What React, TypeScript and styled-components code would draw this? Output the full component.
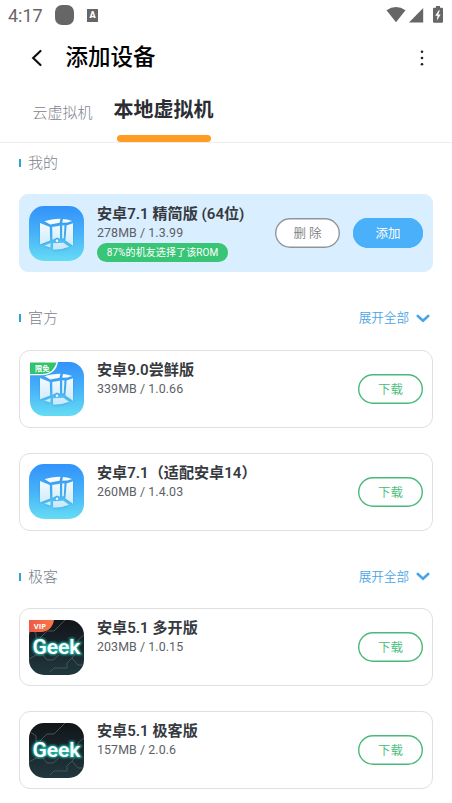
import React from 'react';
import styled, { createGlobalStyle } from 'styled-components';

const GlobalStyle = createGlobalStyle`
  * { box-sizing: border-box; }
  body {
    margin: 0;
    background: #fff;
    font-family: Roboto, "Noto Sans CJK SC", sans-serif;
    overflow: hidden;
  }
  button { font-family: inherit; padding: 0; }
`;

const Screen = styled.div`
  width: 452px;
  height: 803px;
  overflow: hidden;
  background: #fff;
  display: flex;
  flex-direction: column;
`;

const StatusBar = styled.header`
  height: 30px;
  flex: none;
  display: flex;
  align-items: center;
  padding: 0 8px 0 8px;
  color: #666;
`;

const Clock = styled.span`
  font-size: 18px;
  line-height: 30px;
  width: 47px;
  padding-top: 2px;
`;

const Squircle = styled.span`
  width: 19px;
  height: 20px;
  border-radius: 7px;
  background: #666;
  margin-right: 13px;
`;

const InputBadge = styled.span`
  width: 11px;
  height: 13px;
  background: #666;
  color: #fff;
  font-size: 9px;
  font-weight: 900;
  line-height: 13px;
  text-align: center;
  margin-right: auto;
`;

const AppBar = styled.div`
  height: 55px;
  flex: none;
  display: flex;
  align-items: center;
  padding: 0 26px 0 31px;
`;

const PageTitle = styled.h1`
  margin: 0 auto 0 22.6px;
  padding-bottom: 2px;
  font-size: 22.5px;
  line-height: 30px;
  font-weight: 500;
  color: #000;
`;

const Tabs = styled.nav`
  height: 58px;
  flex: none;
  display: flex;
  padding-left: 32.5px;
  gap: 21px;
  border-bottom: 1px solid #ededed;
`;

const Tab = styled.div<{ $active?: boolean }>`
  display: flex;
  flex-direction: column;
  align-items: center;
  justify-content: space-between;
  padding-top: ${p => (p.$active ? 11 : 16.5)}px;
  font-size: ${p => (p.$active ? 20 : 15)}px;
  line-height: ${p => (p.$active ? 28 : 22)}px;
  font-weight: ${p => (p.$active ? 700 : 300)};
  color: ${p => (p.$active ? '#2b2d33' : '#7d828c')};
  white-space: nowrap;
`;

const Indicator = styled.span`
  width: 94px;
  height: 7px;
  border-radius: 4px;
  background: #ff9c24;
`;

const Content = styled.main`
  padding: 8px 19px 0;
`;

const Section = styled.section`
  margin-bottom: 34.2px;
`;

const SectionHeader = styled.div`
  display: flex;
  align-items: center;
  height: 24px;
  margin-bottom: 19.3px;
  padding-right: 3px;
`;

const Marker = styled.span`
  width: 2px;
  height: 8px;
  background: #2ba3d4;
  margin-right: 7px;
`;

const SectionName = styled.h2`
  margin: 0;
  font-size: 15px;
  line-height: 22px;
  font-weight: 300;
  color: #7d828c;
`;

const Expand = styled.button`
  margin-left: auto;
  border: 0;
  background: none;
  display: flex;
  align-items: center;
  gap: 7px;
  font-size: 12.6px;
  line-height: 20px;
  font-weight: 350;
  color: #4aa5e6;
`;

const CardList = styled.div`
  display: flex;
  flex-direction: column;
  gap: 25px;
`;

const Card = styled.article<{ $selected?: boolean }>`
  height: 78px;
  display: flex;
  align-items: center;
  padding: 0 9px;
  border-radius: ${p => (p.$selected ? 9 : 11)}px;
  border: 1px solid ${p => (p.$selected ? '#d9eefe' : '#dfe0e1')};
  background: ${p => (p.$selected ? '#d9eefe' : '#fff')};
`;

const IconBox = styled.div`
  width: 55px;
  height: 55px;
  flex: none;
  margin-right: 13px;
`;

const Info = styled.div`
  align-self: flex-start;
  padding-top: 8px;
  flex: 1;
  min-width: 0;
  display: flex;
  flex-direction: column;
  align-items: flex-start;
`;

const Name = styled.h3`
  margin: 0;
  font-size: 15.1px;
  line-height: 22px;
  font-weight: 600;
  color: #363a40;
  white-space: nowrap;
`;

const Meta = styled.span`
  font-size: 12.4px;
  line-height: 16px;
  letter-spacing: 0.08px;
  color: #5b5f66;
`;

const Popularity = styled.span`
  width: 131px;
  height: 19px;
  margin-top: 2px;
  border-radius: 10px;
  background: #38c575;
  color: #fff;
  font-size: 10px;
  line-height: 19px;
  letter-spacing: 0.1px;
  text-align: center;
  white-space: nowrap;
`;

const Actions = styled.div`
  display: flex;
  gap: 13px;
`;

type Tone = 'neutral' | 'primary' | 'download';
const tones: Record<Tone, { line: string; fill: string; text: string; width: number }> = {
  neutral: { line: '#91959b', fill: '#fff', text: '#777b81', width: 65 },
  primary: { line: '#49b0f9', fill: '#49b0f9', text: '#fff', width: 70 },
  download: { line: '#49b97a', fill: '#fff', text: '#43bd78', width: 65 },
};

const Pill = styled.button<{ $tone: Tone }>`
  width: ${p => tones[p.$tone].width}px;
  height: 30px;
  border-radius: 15px;
  border: none;
  box-shadow: inset 0 0 0 1.4px ${p => tones[p.$tone].line};
  background: ${p => tones[p.$tone].fill};
  color: ${p => tones[p.$tone].text};
  font-size: 12.5px;
  line-height: 29px;
  padding-top: 1px;
  font-weight: ${p => (p.$tone === 'primary' ? 400 : 350)};
`;

type Flag = 'free' | 'vip';

function CubeIcon({ id, flag }: { id: string; flag?: Flag }) {
  return (
    <svg width="55" height="55" viewBox="0 0 55 55">
      <defs>
        <linearGradient id={`${id}-bg`} x1="0" y1="0" x2="0" y2="1">
          <stop offset="0" stopColor="#3292fb" />
          <stop offset="0.5" stopColor="#47b2f8" />
          <stop offset="1" stopColor="#65dcf4" />
        </linearGradient>
        <linearGradient id={`${id}-face`} gradientUnits="userSpaceOnUse" x1="0" y1="12" x2="0" y2="44">
          <stop offset="0" stopColor="#fbfdff" />
          <stop offset="1" stopColor="#c8e8fa" />
        </linearGradient>
        <filter id={`${id}-shade`} x="-20%" y="-20%" width="140%" height="140%">
          <feDropShadow dx="0" dy="0.8" stdDeviation="1.2" floodColor="#1e78c0" floodOpacity="0.35" />
        </filter>
      </defs>
      {flag === 'free' ? (
        <rect x="1" y="1" width="54" height="54" rx="14.5" fill={`url(#${id}-bg)`} />
      ) : (
        <rect width="55" height="55" rx="15" fill={`url(#${id}-bg)`} />
      )}
      <g fill={`url(#${id}-face)`} filter={`url(#${id}-shade)`}>
        <path d="M15.6 15.2 Q22 13 31.4 12.7 L30.6 16.8 L21.2 18.5 Z" />
        <path d="M34 12.9 Q39.5 13.2 43 15 L38.4 16.6 L33.2 16.8 Z" />
        <path d="M11 17 L20.8 20.9 L21.1 34.4 L11.4 38.2 Q11 38.2 11 37.6 Z" />
        <path d="M23.2 21 L31 19.8 V32.8 L28 31.6 L23.5 33.8 Z" />
        <path d="M33.2 19.6 L35.4 19.3 L34.8 32 L33.2 32.6 Z" />
        <path d="M37.6 19.6 L44 17.2 V39.8 L36.5 34.6 Z" />
        <path d="M15.6 39.6 L21.6 37.3 L21.3 41.4 Z" />
        <path d="M24 37.3 L34.4 36.8 L40 40.8 Q33 43.9 24.1 43.4 Z" />
      </g>
      <circle cx="28" cy="34.7" r="1.2" fill="#fff" />
      {flag === 'free' && (
        <g>
          <path d="M0.5 0.5 H29 C28 9 22 14.2 13 14.2 H0.5 Z" fill="#fff" />
          <path d="M1 1.5 H27.5 C25.5 8.6 20.5 13 13 13 H1 Z" fill="#32c46c" />
          <text x="6" y="9.8" fontSize="7.2" fontWeight="700" fill="#fff" fontFamily="Noto Sans CJK SC, sans-serif">限免</text>
        </g>
      )}
    </svg>
  );
}

function GeekIcon({ id, flag }: { id: string; flag?: Flag }) {
  return (
    <svg width="55" height="55" viewBox="0 0 55 55">
      <defs>
        <linearGradient id={`${id}-bg`} x1="0" y1="0" x2="0" y2="1">
          <stop offset="0" stopColor="#121519" />
          <stop offset="1" stopColor="#20383e" />
        </linearGradient>
        <linearGradient id={`${id}-vip`} x1="0" y1="0" x2="1" y2="0">
          <stop offset="0" stopColor="#ef5948" />
          <stop offset="1" stopColor="#fa7848" />
        </linearGradient>
        <clipPath id={`${id}-clip`}><rect width="55" height="55" rx="15" /></clipPath>
        <filter id={`${id}-glow`} x="-20%" y="-50%" width="140%" height="200%">
          <feGaussianBlur stdDeviation="1" />
        </filter>
      </defs>
      <g clipPath={`url(#${id}-clip)`}>
        <rect width="55" height="55" fill={`url(#${id}-bg)`} />
        <g fill="none" stroke="#46545a" strokeWidth="1">
          <path d="M0 8 L7 13 V18 L10 21 M11 18 L18 11 H25 L36 0" />
          <path d="M55 15 L49 20 V26 M0 39 L7 35 H14 L18 40 H24 L30 35" />
          <path d="M21 52 L25 48 H38 V43 L43 38 L49 45 H55 M43 38 L48 32" />
        </g>
        <g fontFamily="Roboto, sans-serif" fontSize="19.5" fontWeight="600">
          <text x="3.4" y="34" textLength="48" lengthAdjust="spacingAndGlyphs" fill="#2fd0c2" stroke="#22b9ae" strokeWidth="2" filter={`url(#${id}-glow)`}>Geek</text>
          <text x="3.4" y="34" textLength="48" lengthAdjust="spacingAndGlyphs" fill="#fff">Geek</text>
        </g>
      </g>
      {flag === 'vip' && (
        <g>
          <path d="M0 0 H25 C24 7 19 12 12 12 H0 Z" fill={`url(#${id}-vip)`} />
          <text x="4.8" y="8.8" fontSize="7.6" fontWeight="700" fill="#fff" fontFamily="Open Sans, sans-serif" textLength="12.4" lengthAdjust="spacingAndGlyphs">VIP</text>
        </g>
      )}
    </svg>
  );
}

interface Rom {
  id: string;
  name: string;
  meta: string;
  geek?: boolean;
  flag?: Flag;
  installed?: boolean;
  note?: string;
}

const sections: { name: string; expandable?: boolean; roms: Rom[] }[] = [
  {
    name: '我的',
    roms: [{ id: 'mine', name: '安卓7.1 精简版 (64位)', meta: '278MB / 1.3.99', installed: true, note: '87%的机友选择了该ROM' }],
  },
  {
    name: '官方',
    expandable: true,
    roms: [
      { id: 'a9', name: '安卓9.0尝鲜版', meta: '339MB / 1.0.66', flag: 'free' },
      { id: 'a7', name: '安卓7.1（适配安卓14）', meta: '260MB / 1.4.03' },
    ],
  },
  {
    name: '极客',
    expandable: true,
    roms: [
      { id: 'g1', name: '安卓5.1 多开版', meta: '203MB / 1.0.15', geek: true, flag: 'vip' },
      { id: 'g2', name: '安卓5.1 极客版', meta: '157MB / 2.0.6', geek: true },
    ],
  },
];

function RomCard({ rom }: { rom: Rom }) {
  return (
    <Card $selected={rom.installed}>
      <IconBox>
        {rom.geek ? <GeekIcon id={rom.id} flag={rom.flag} /> : <CubeIcon id={rom.id} flag={rom.flag} />}
      </IconBox>
      <Info>
        <Name>{rom.name}</Name>
        <Meta>{rom.meta}</Meta>
        {rom.note && <Popularity>{rom.note}</Popularity>}
      </Info>
      <Actions>
        {rom.installed ? (
          <>
            <Pill $tone="neutral">删 除</Pill>
            <Pill $tone="primary">添加</Pill>
          </>
        ) : (
          <Pill $tone="download">下载</Pill>
        )}
      </Actions>
    </Card>
  );
}

export default function App() {
  return (
    <>
      <GlobalStyle />
      <Screen>
        <StatusBar>
          <Clock>4:17</Clock>
          <Squircle />
          <InputBadge>A</InputBadge>
          <svg width="58" height="18" viewBox="0 0 58 18" fill="#666">
            <path d="M0.5 4.3 Q10 -2.2 19.5 4.3 L10 16.3 Z" />
            <path d="M23 16.5 H37.2 V2 Z" />
            <path d="M50 0 H54 V1.8 H56 Q57 1.8 57 2.8 V15.8 Q57 16.8 56 16.8 H48 Q47 16.8 47 15.8 V2.8 Q47 1.8 48 1.8 H50 Z" />
            <path d="M52.8 4.3 L49.2 9.8 H51.5 L50.8 14.7 L54.7 8.6 H52.3 L53.8 4.3 Z" fill="#fff" />
          </svg>
        </StatusBar>
        <AppBar>
          <svg width="12" height="18" viewBox="0 0 12 18">
            <path d="M9.5 2 L2.2 9 L9.5 16" fill="none" stroke="#111" strokeWidth="2.2" strokeLinecap="round" />
          </svg>
          <PageTitle>添加设备</PageTitle>
          <svg width="8" height="18" viewBox="0 0 8 18" fill="#222">
            <circle cx="4" cy="2.8" r="1.3" />
            <circle cx="4" cy="9" r="1.3" />
            <circle cx="4" cy="15.2" r="1.3" />
          </svg>
        </AppBar>
        <Tabs>
          <Tab>云虚拟机</Tab>
          <Tab $active>
            本地虚拟机
            <Indicator />
          </Tab>
        </Tabs>
        <Content>
          {sections.map(s => (
            <Section key={s.name}>
              <SectionHeader>
                <Marker />
                <SectionName>{s.name}</SectionName>
                {s.expandable && (
                  <Expand>
                    展开全部
                    <svg width="14" height="9" viewBox="0 0 14 9">
                      <path d="M1.8 2 L7 6.8 L12.2 2" fill="none" stroke="#4aa5e6" strokeWidth="2.6" strokeLinecap="round" />
                    </svg>
                  </Expand>
                )}
              </SectionHeader>
              <CardList>
                {s.roms.map(r => (
                  <RomCard key={r.id} rom={r} />
                ))}
              </CardList>
            </Section>
          ))}
        </Content>
      </Screen>
    </>
  );
}
